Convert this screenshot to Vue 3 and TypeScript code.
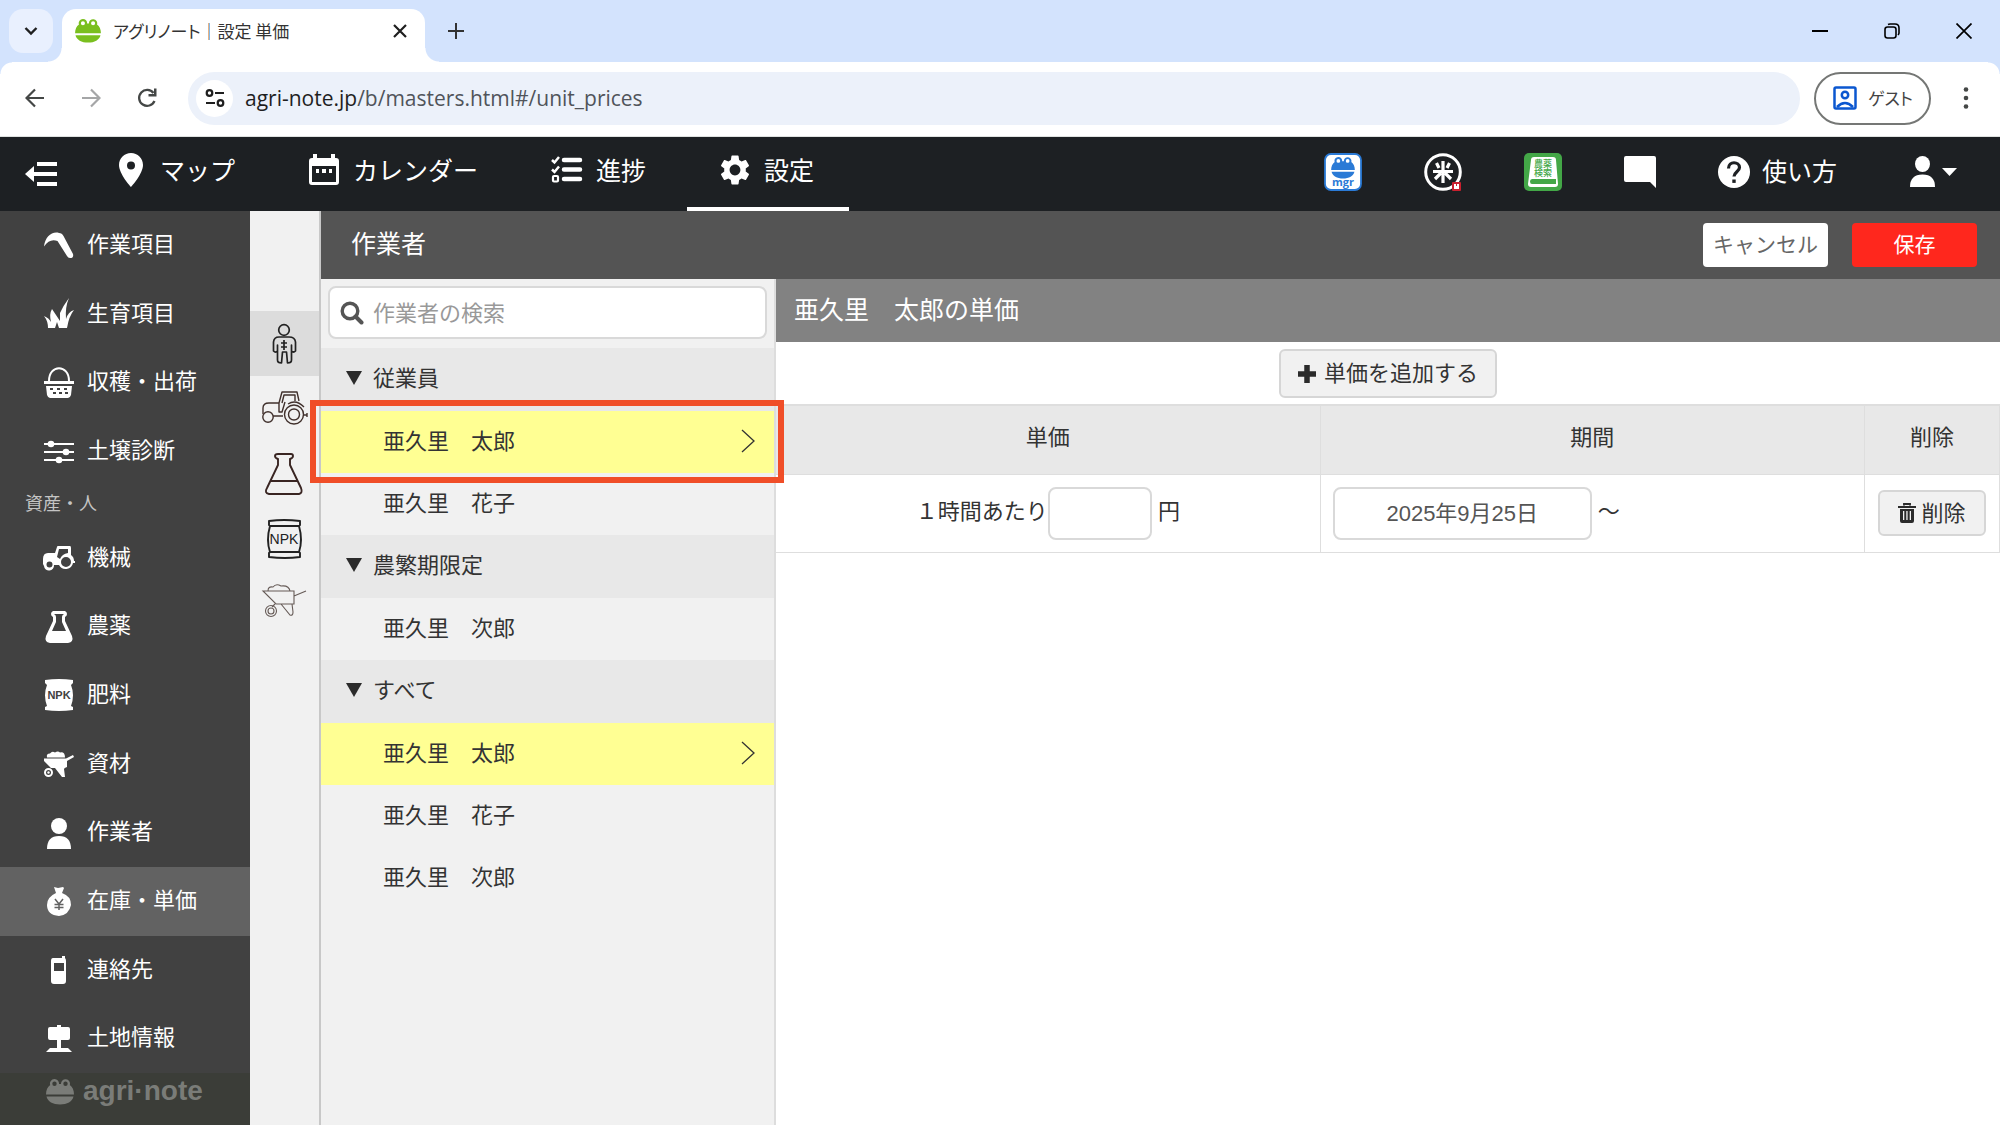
<script setup lang="ts">
import { ref } from 'vue'

interface NavItem { label: string; icon: string }
interface WorkerGroup { name: string; workers: string[] }

const topNav: NavItem[] = [
  { label: 'マップ', icon: 'pin' },
  { label: 'カレンダー', icon: 'calendar' },
  { label: '進捗', icon: 'checklist' },
  { label: '設定', icon: 'gear' },
]
const activeTop = '設定'

const workItems: NavItem[] = [
  { label: '作業項目', icon: 'sickle' },
  { label: '生育項目', icon: 'grass' },
  { label: '収穫・出荷', icon: 'basket' },
  { label: '土壌診断', icon: 'sliders' },
]
const assetItems: NavItem[] = [
  { label: '機械', icon: 'tractor' },
  { label: '農薬', icon: 'flask' },
  { label: '肥料', icon: 'bag' },
  { label: '資材', icon: 'barrow' },
  { label: '作業者', icon: 'person' },
  { label: '在庫・単価', icon: 'money' },
  { label: '連絡先', icon: 'phone' },
  { label: '土地情報', icon: 'sign' },
]
const activeSide = '在庫・単価'

const categories: NavItem[] = [
  { label: '作業者', icon: 'o-worker' },
  { label: '機械', icon: 'o-tractor' },
  { label: '農薬', icon: 'o-flask' },
  { label: '肥料', icon: 'o-bag' },
  { label: '資材', icon: 'o-barrow' },
]
const activeCategory = '作業者'

const groups: WorkerGroup[] = [
  { name: '従業員', workers: ['亜久里　太郎', '亜久里　花子'] },
  { name: '農繁期限定', workers: ['亜久里　次郎'] },
  { name: 'すべて', workers: ['亜久里　太郎', '亜久里　花子', '亜久里　次郎'] },
]
const selected = ref('亜久里　太郎')
const search = ref('')
const price = ref('')
const startDate = ref('2025年9月25日')
</script>

<template>
  <div class="window">
    <svg class="sprite" aria-hidden="true">
      <symbol id="frog" viewBox="0 0 28 26">
        <g fill="currentColor">
          <path fill-rule="evenodd" d="M8.500 0a4.500 4.500 0 0 1 4.500 5h2a4.500 4.500 0 1 1 8.800 1C26.500 8 28 11 28 15.500H0C0 11 1.500 8 4.200 6A4.500 4.500 0 0 1 8.500 0zM8.500 2.500a2.200 2.200 0 1 0 0 4.400a2.200 2.200 0 0 0 0-4.400zM19.500 2.500a2.200 2.200 0 1 0 0 4.400a2.200 2.200 0 0 0 0-4.400z" />
          <path d="M0.500 17.500h27c-1 5-6.500 8-13.500 8s-12.500-3-13.500-8z" />
        </g>
      </symbol>
      <symbol id="pin" viewBox="0 0 32 36"><path fill="currentColor" fill-rule="evenodd" d="M16 1c6.600 0 12 5.200 12 12c0 9-12 22-12 22S4 22 4 13C4 6.200 9.400 1 16 1zm0 8.500a4 4 0 1 0 0 8a4 4 0 0 0 0-8z" /></symbol>
      <symbol id="calendar" viewBox="0 0 32 36"><path fill="currentColor" fill-rule="evenodd" d="M5 2h4v4h14V2h4v4h1q3 0 3 3v21q0 3-3 3H4q-3 0-3-3V9q0-3 3-3h1zM4 14v16h24V14zM8 17h3v4H8zM14 17h4v4h-4zM21 17h3v4h-3z" /></symbol>
      <symbol id="checklist" viewBox="0 0 32 36">
        <g fill="none" stroke="currentColor"><path stroke-width="4.500" stroke-linecap="round" d="M13 8h16M13 17.500h16M13 27h16" /><path stroke-width="2.500" d="M1 8l2.500 2.500l4.500-5.500M1 17.500L3.500 20L8 14.500" /><rect x="2" y="24" width="5" height="5.500" rx="1" stroke-width="2.200" /></g>
      </symbol>
      <symbol id="gear" viewBox="2 2 20 20"><path fill="currentColor" d="M19.140 12.940c.04-.3.06-.61.06-.94s-.02-.64-.07-.94l2.030-1.580c.18-.14.23-.41.12-.61l-1.920-3.320c-.12-.22-.37-.29-.59-.22l-2.390.96c-.5-.38-1.030-.7-1.620-.94l-.36-2.540c-.04-.24-.24-.41-.48-.41h-3.840c-.24 0-.43.17-.47.41l-.36 2.540c-.59.24-1.130.57-1.620.94l-2.390-.96c-.22-.08-.47 0-.59.22L2.740 8.870c-.12.21-.08.470.12.610l2.030 1.580c-.05.3-.09.630-.09.940s.02.640.07.940l-2.030 1.580c-.18.140-.23.410-.12.610l1.920 3.320c.12.220.37.290.59.220l2.390-.96c.5.380 1.030.700 1.620.940l.36 2.540c.05.240.24.410.48.410h3.840c.24 0 .44-.17.47-.41l.36-2.540c.59-.24 1.130-.56 1.620-.94l2.390.96c.22.080.47 0 .59-.22l1.920-3.320c.12-.22.070-.47-.12-.61l-2.010-1.580zM12 15.600c-1.980 0-3.600-1.620-3.600-3.600s1.620-3.600 3.600-3.600 3.600 1.620 3.600 3.600-1.620 3.600-3.600 3.600z" /></symbol>

      <symbol id="sickle" viewBox="0 0 32 32"><path fill="currentColor" d="M1 17.500C2 8 9 2 16 4q3 0 4.500 3L30 25q1 4-3 4q-2 0-3-2L14.500 12C9 10 5 12 1 17.500z" /></symbol>
      <symbol id="grass" viewBox="0 0 32 32"><path fill="currentColor" d="M5 30Q5 23 1 18q5 2 7 6q-2-8 1-13q4 6 8 12q0-5 0-8Q20 8 26 0Q22 9 23 21q2-7 8-9q-5 6-7 18h-8l-2-6l-2 6z" /></symbol>
      <symbol id="basket" viewBox="0 0 32 32">
        <path fill="none" stroke="currentColor" stroke-width="2" d="M6 14C6 -3 26 -3 26 14" /><path fill="currentColor" d="M1 14h30v3H1z" />
        <path fill="currentColor" fill-rule="evenodd" d="M3 19h26l-1 9q-1 3-3 3H7q-2 0-3-3zM7 21v2h3v-2zM14 21v2h3v-2zM21 21v2h3v-2zM10 25v2h3v-2zM16 25v2h3v-2zM22 25v2h3v-2z" />
      </symbol>
      <symbol id="sliders" viewBox="0 0 32 32"><path stroke="currentColor" stroke-width="2.200" d="M1 9h30M1 17h30M1 25h30" /><g fill="currentColor"><circle cx="8" cy="9" r="3.300" /><circle cx="23" cy="17" r="3.300" /><circle cx="16" cy="25" r="3.300" /></g></symbol>
      <symbol id="tractor" viewBox="0 0 32 32">
        <path fill="currentColor" fill-rule="evenodd" d="M0 22v-5q0-6 5-6h7l2-6q0-1 1-1h12q1 0 1 2v7q3 2 3 6h1v2h-2a7.500 7.500 0 0 1-14 2h-5a5 5 0 0 1-10 1zM16 7l-2 8l3 2q2-5 8-6V7zM6.500 19.500a3 3 0 1 0 0 6a3 3 0 0 0 0-6zM23 15a5 5 0 1 0 0 10a5 5 0 0 0 0-10z" />
      </symbol>
      <symbol id="flask" viewBox="0 0 32 32"><path fill="currentColor" fill-rule="evenodd" d="M10 0h12q2 1 2 3q0 2-2 3v4l7 15q2 6-4 7H7q-6-1-4-7l7-15V6q-2-1-2-3q0-2 2-3zM11 3q2 1 2 3v5L9 20h14l-4-9V6q0-2 2-3z" /></symbol>
      <symbol id="bag" viewBox="0 0 32 32"><path fill="currentColor" d="M2 1q14-2 28 0v3l-2 2q4 10 0 21l2 1v3q-14 2-28 0v-3l2-1Q0 16 4 6L2 4z" /></symbol>
      <symbol id="barrow" viewBox="0 0 32 32">
        <path fill="currentColor" d="M4 9.500q-1-4 3-4q2-3 5-1q3-2 5 0q5-1 5 5z" />
        <path fill="currentColor" d="M1 10.500h22l7-3.500l1 2l-7 4v6q-3 1-3 2l1 8h-3l-7-9h-4L1 13z" />
        <circle cx="5.500" cy="24.500" r="3.500" fill="none" stroke="currentColor" stroke-width="2" /><circle cx="5.500" cy="24.500" r="1.200" fill="currentColor" />
      </symbol>
      <symbol id="person" viewBox="0 0 32 32"><g fill="currentColor"><circle cx="16" cy="9" r="8" /><path d="M4 32q0-13 12-13t12 13z" /></g></symbol>
      <symbol id="money" viewBox="0 0 32 32"><path fill="currentColor" d="M11 2l4 1l5-1l1 1l-2 5q9 3 9 12q-2 10-12 11Q4 30 4 20q0-8 9-12z" /><path fill="none" stroke="#626262" stroke-width="1.500" d="M12 14l4 5l4-5M16 19v6M11.500 19.500h9M11.500 22.500h9" /></symbol>
      <symbol id="phone" viewBox="0 0 32 32"><path fill="currentColor" fill-rule="evenodd" d="M10 4h9V2h3v2q1 1 1 3v20q0 3-3 3h-9q-3 0-3-3V7q0-3 2-3zM11 9v8h10V9z" /></symbol>
      <symbol id="sign" viewBox="0 0 32 32"><path fill="currentColor" d="M14 2h4v2h7q2 0 2 2v9q0 2-2 2h-7v8h7l4 4H3l4-4h7v-8H7q-2 0-2-2V6q0-2 2-2h7z" /></symbol>

      <symbol id="o-worker" viewBox="0 0 48 48">
        <g fill="none" stroke="#222" stroke-width="1.700" stroke-linejoin="round"><circle cx="23" cy="10" r="5.300" /><path d="M18 17h10q6 0 6.500 5v9q-2 2-4 0v-6v15q0 3-4 3l-1-11h-4l-1 11q-4 0-4-3V25v6q-2 2-4 0v-9q.5-5 5.500-5z" /><path d="M23 20v10M20 23h6M20 27h6" /></g>
      </symbol>
      <symbol id="o-tractor" viewBox="0 -2 48 48">
        <g fill="none" stroke="#40302c" stroke-width="1.400" stroke-linejoin="round"><path d="M2 27v-6q0-5 6-5h10l3-11h15l2 9M21 16l2-8h11v6M18 16v9h3l3-10M12 29h10M27 17q8-5 16 3M43 28h3v-2M46 28v2" /><circle cx="7" cy="30" r="5.200" /><circle cx="33" cy="27.500" r="9.500" /><circle cx="33" cy="27.500" r="5.500" /></g>
      </symbol>
      <symbol id="o-flask" viewBox="0 0 48 48"><g fill="none" stroke="#392522" stroke-width="1.900" stroke-linejoin="round"><path d="M17 4h13q2 0 2 2q0 2-3 3v6l11 23q2 5-2 6H8q-5-1-2-6l11-23V9q-3-1-3-3q0-2 3-2zM10 31h27" /></g></symbol>
      <symbol id="o-bag" viewBox="0 0 48 48"><path fill="none" stroke="#222" stroke-width="1.900" stroke-linejoin="round" d="M8 6q15-2 31 0v4l-1 1q4 14 0 26l1 1v4q-15 2-31 0v-4l1-1q-4-12 0-26l-1-1zM9 11h29M9 37h29" /></symbol>
      <symbol id="o-barrow" viewBox="0 0 48 48"><g fill="none" stroke="#665b57" stroke-width="1.100"><path d="M2 11h31v13H15zM33 16l12-5M7 11q0-5 5-4q3-4 8-1q8-1 9 5M20 24l9 11q3 1 3-3l-1-8M11 27l3-3" /><circle cx="10" cy="31" r="5.500" /><circle cx="10" cy="31" r="3" /></g></symbol>
    </svg>

    <div class="tabstrip">
      <button class="tab-search" aria-label="タブを検索"><svg width="14" height="10" viewBox="0 0 14 10"><path d="M1.500 2l5.500 5.500L12.500 2" fill="none" stroke="#1f1f1f" stroke-width="2.400" /></svg></button>
      <div class="tab">
        <svg class="favicon" width="26" height="24"><use href="#frog" /></svg>
        <span class="tab-title">アグリノート｜設定 単価</span>
        <button class="icon-btn" aria-label="タブを閉じる"><svg width="14" height="14" viewBox="0 0 14 14"><path d="M1 1l12 12M13 1L1 13" stroke="#1f1f1f" stroke-width="2.200" /></svg></button>
      </div>
      <button class="icon-btn new-tab" aria-label="新しいタブ"><svg width="18" height="18" viewBox="0 0 18 18"><path d="M9 1v16M1 9h16" stroke="#333" stroke-width="2" /></svg></button>
      <div class="win-controls">
        <button class="icon-btn" aria-label="最小化"><svg width="16" height="16" viewBox="0 0 16 16"><path d="M0 8h16" stroke="#000" stroke-width="2" /></svg></button>
        <button class="icon-btn" aria-label="元に戻す"><svg width="16" height="16" viewBox="0 0 16 16"><g fill="none" stroke="#000" stroke-width="1.600"><rect x="1" y="4" width="11" height="11" rx="2.500" /><path d="M4 1.500Q5 1 6 1h5q4 0 4 4v5q0 1-1 2" /></g></svg></button>
        <button class="icon-btn" aria-label="閉じる"><svg width="16" height="16" viewBox="0 0 16 16"><path d="M0.500 0.500l15 15M15.500 0.500l-15 15" stroke="#000" stroke-width="1.700" /></svg></button>
      </div>
    </div>

    <div class="toolbar">
      <div class="history">
        <button class="icon-btn" aria-label="戻る"><svg width="20" height="20" viewBox="0 0 20 20"><path d="M19 10H2M10 1.500L1.500 10L10 18.500" fill="none" stroke="#444746" stroke-width="2.200" /></svg></button>
        <button class="icon-btn" aria-label="進む"><svg width="20" height="20" viewBox="0 0 20 20"><path d="M1 10h17M10 1.500l8.500 8.500L10 18.500" fill="none" stroke="#a5a6a7" stroke-width="2.200" /></svg></button>
        <button class="icon-btn" aria-label="再読み込み"><svg width="20" height="20" viewBox="0 0 20 20"><path d="M17.500 13A8 8 0 1 1 16.500 5" fill="none" stroke="#444746" stroke-width="2.300" /><path d="M19.500 0.500v8h-8V6h5.500V0.500z" fill="#444746" /></svg></button>
      </div>
      <div class="omnibox">
        <span class="site-info"><svg width="20" height="20" viewBox="0 0 20 20"><g fill="none" stroke="#1f1f1f" stroke-width="2.200"><circle cx="4.500" cy="5" r="2.800" /><circle cx="15.500" cy="15" r="2.800" /><path d="M10 5h9M1 15h9" /></g></svg></span>
        <span class="url">agri-note.jp<span class="path">/b/masters.html#/unit_prices</span></span>
      </div>
      <button class="guest">
        <svg width="24" height="24" viewBox="0 0 24 24"><g fill="none" stroke="#0b57d0" stroke-width="2.500"><rect x="1.500" y="1.500" width="21" height="21" rx="1.500" /><circle cx="12" cy="9" r="3.200" /><path d="M4 21q8-8 16 0" /></g></svg>
        <span>ゲスト</span>
      </button>
      <button class="icon-btn menu-dots" aria-label="メニュー"><svg width="6" height="24" viewBox="0 0 6 24"><g fill="#444746"><circle cx="3" cy="3.500" r="2.300" /><circle cx="3" cy="12" r="2.300" /><circle cx="3" cy="20.500" r="2.300" /></g></svg></button>
    </div>

    <header class="app-header">
      <button class="collapse" aria-label="メニューを閉じる"><svg width="32" height="26" viewBox="0 0 32 26"><path d="M12 3h20M6 13h26M12 23h20" stroke="#fff" stroke-width="4" /><path d="M9 5v16L0 13z" fill="#fff" /></svg></button>
      <nav class="top-nav">
        <a v-for="n in topNav" :key="n.label" href="#" :class="{ active: n.label === activeTop }">
          <svg width="32" :height="n.icon === 'gear' ? 30 : 36"><use :href="'#' + n.icon" /></svg><span>{{ n.label }}</span>
        </a>
      </nav>
      <div class="top-tools">
        <a href="#" aria-label="マネージャー"><svg width="38" height="38" viewBox="0 0 38 38"><rect x="1" y="1" width="36" height="36" rx="6" fill="#fff" stroke="#2a7ad6" stroke-width="1.800" /><svg x="7" y="4" width="24" height="22" color="#2a7ad6"><use href="#frog" /></svg><text x="19" y="33" text-anchor="middle" font-family="Open Sans" font-weight="700" font-size="11" fill="#2a7ad6">mgr</text></svg></a>
        <a href="#" aria-label="米"><svg width="38" height="38" viewBox="0 0 38 38"><circle cx="19" cy="19" r="17.300" fill="none" stroke="#fff" stroke-width="3" /><path d="M19 8v22M9 18.500h20M12.500 10l2.500 5M25.500 10l-2.500 5M17 20l-6 6M21 20l6 6" fill="none" stroke="#fff" stroke-width="3.200" /><rect x="28" y="29" width="9" height="9" rx="1" fill="#c9202e" /><path d="M30 31h2v2h1v-2h2v5h-5z" fill="#fff" /></svg></a>
        <a href="#" aria-label="農薬検索"><svg width="38" height="38" viewBox="0 0 38 38"><rect width="38" height="38" rx="5" fill="#43a747" /><path d="M10 4h19q3 0 3 3l2 24q0 3-3 3H7q-3 0-3-3L7 7q0-3 3-3z" fill="#fff" /><path d="M8 26h24v5H8q-2 0-2-2.500T8 26z" fill="#43a747" /><text font-family="Noto Sans CJK JP" font-weight="500" font-size="9" fill="#43a747"><tspan x="10" y="14">農薬</tspan><tspan x="10" y="23">検索</tspan></text></svg></a>
        <a href="#" aria-label="メッセージ"><svg width="32" height="32" viewBox="0 0 32 32"><path d="M2 0h28q2 0 2 2v30l-6-6H2q-2 0-2-2V2q0-2 2-2z" fill="#fff" /></svg></a>
        <a href="#" class="help"><svg width="32" height="32" viewBox="0 0 32 32"><circle cx="16" cy="16" r="16" fill="#fff" /><path d="M10.500 12.500c0-8 11-7 11-1c0 4-5.500 4.500-5.500 9" fill="none" stroke="#1d2023" stroke-width="3.200" /><rect x="14.300" y="23.500" width="3.400" height="3.400" fill="#1d2023" /></svg><span>使い方</span></a>
        <button class="user" aria-label="アカウント"><svg width="48" height="32" viewBox="0 0 48 32"><g fill="#fff"><ellipse cx="12.500" cy="8" rx="7.500" ry="8" /><path d="M0 31q0-12.500 12.500-12.500T25 31zM32 12h15l-7.500 8z" /></g></svg></button>
      </div>
    </header>

    <div class="body">
      <aside class="sidebar">
        <a v-for="n in workItems" :key="n.label" href="#" class="side-item"><svg width="32" height="32"><use :href="'#' + n.icon" /></svg><span>{{ n.label }}</span></a>
        <div class="side-heading">資産・人</div>
        <a v-for="n in assetItems" :key="n.label" href="#" class="side-item" :class="{ active: n.label === activeSide }">
          <svg width="32" height="32"><use :href="'#' + n.icon" /><text v-if="n.icon === 'bag'" class="bag-text" x="16" y="20">NPK</text></svg><span>{{ n.label }}</span>
        </a>
        <div class="brand"><svg width="28" height="26"><use href="#frog" /></svg><span>agri·note</span></div>
      </aside>

      <nav class="rail">
        <a v-for="c in categories" :key="c.label" href="#" :aria-label="c.label" :class="{ active: c.label === activeCategory }">
          <svg width="48" height="48"><use :href="'#' + c.icon" /><text v-if="c.icon === 'o-bag'" class="bag-outline-text" x="23" y="29">NPK</text></svg>
        </a>
      </nav>

      <main class="main">
        <div class="title-bar">
          <h1>作業者</h1>
          <button class="action cancel">キャンセル</button>
          <button class="action save">保存</button>
        </div>
        <div class="split">
          <section class="list">
            <label class="search">
              <svg width="24" height="24" viewBox="0 0 24 24"><circle cx="10" cy="10" r="7.800" fill="none" stroke="#555" stroke-width="3.400" /><path d="M15.500 15.500l6 6" stroke="#555" stroke-width="4" stroke-linecap="round" /></svg>
              <input v-model="search" type="text" placeholder="作業者の検索" aria-label="作業者の検索" />
            </label>
            <div v-for="(g, gi) in groups" :key="g.name" class="group">
              <h2><svg width="16" height="16" viewBox="0 0 16 16"><path d="M0 1h16L8 15z" fill="#2b2b2b" /></svg><span>{{ g.name }}</span></h2>
              <button v-for="w in g.workers" :key="w" class="worker" :class="{ selected: w === selected, marked: gi === 0 && w === selected }" @click="selected = w">
                <span>{{ w }}</span>
                <svg v-if="w === selected" width="14" height="24" viewBox="0 0 14 24"><path d="M1 1l12 11L1 23" fill="none" stroke="#333" stroke-width="1.300" /></svg>
              </button>
            </div>
          </section>

          <section class="detail">
            <h2 class="detail-title">{{ selected }}の単価</h2>
            <div class="add-row">
              <button class="btn add"><svg width="18" height="18" viewBox="0 0 18 18"><path d="M9 0v18M0 9h18" stroke="#2b2b2b" stroke-width="5.500" /></svg><span>単価を追加する</span></button>
            </div>
            <table>
              <thead><tr><th>単価</th><th>期間</th><th class="del">削除</th></tr></thead>
              <tbody>
                <tr>
                  <td class="price"><label for="price">１時間あたり</label><input id="price" v-model="price" type="text" /><span class="unit">円</span></td>
                  <td class="period"><input v-model="startDate" type="text" aria-label="開始日" /><span>～</span></td>
                  <td class="del"><button class="btn remove"><svg width="18" height="20" viewBox="0 0 18 20"><path d="M6 2.500V1h6v1.500M0 4h18" fill="none" stroke="#2b2b2b" stroke-width="1.900" /><path d="M2 6h14v12q0 2-2 2H4q-2 0-2-2zM5 8v9h1.300V8zM8.300 8v9h1.300V8zM11.700 8v9H13V8z" fill="#2b2b2b" fill-rule="evenodd" /></svg><span>削除</span></button></td>
                </tr>
              </tbody>
            </table>
          </section>
        </div>
      </main>
    </div>
  </div>
</template>

<style>
body { margin: 0; background: #fff; }
</style>

<style scoped>
* { box-sizing: border-box; }
.window { display: flex; flex-direction: column; min-height: 100vh; font-family: "Noto Sans CJK JP", sans-serif; font-size: 22px; line-height: 32px; color: #333; }
.sprite { position: absolute; width: 0; height: 0; }
svg { display: block; flex: none; }
button { font: inherit; color: inherit; margin: 0; padding: 0; border: 0; background: none; }
a { color: inherit; text-decoration: none; }
h1, h2 { margin: 0; font-weight: 400; }
.icon-btn { display: flex; align-items: center; justify-content: center; }

.tabstrip { display: flex; align-items: flex-start; height: 62px; padding: 9px 28px 0 9px; background: #d3e3fd; }
.tab-search { display: flex; align-items: center; justify-content: center; width: 44px; height: 44px; border-radius: 14px; background: #e9f0fe; }
.tab { position: relative; display: flex; align-items: center; width: 363px; height: 53px; margin-left: 9px; padding: 0 18px 9px 13px; border-radius: 14px 14px 0 0; background: #fff; }
.tab::before, .tab::after { content: ""; position: absolute; bottom: 0; width: 14px; height: 14px; }
.tab::before { left: -14px; background: radial-gradient(circle at 0 0, transparent 13px, #fff 14px); }
.tab::after { right: -14px; background: radial-gradient(circle at 100% 0, transparent 13px, #fff 14px); }
.favicon { color: #7abf1f; }
.tab-title { flex: 1; margin-left: 12px; font-size: 17px; line-height: 24px; font-feature-settings: "palt"; color: #333; }
.new-tab { width: 32px; height: 44px; margin-left: 15px; }
.win-controls { display: flex; align-items: center; gap: 56px; height: 44px; margin-left: auto; }

.toolbar { position: relative; display: flex; align-items: center; height: 75px; padding: 0 31px 2px 25px; border-bottom: 1px solid #dfe2e0; background: #fff; }
.toolbar::before, .toolbar::after { content: ""; position: absolute; top: 0; width: 12px; height: 12px; }
.toolbar::before { left: 0; background: radial-gradient(circle at 100% 100%, transparent 11px, #d3e3fd 12px); }
.toolbar::after { right: 0; background: radial-gradient(circle at 0 100%, transparent 11px, #d3e3fd 12px); }
.history { display: flex; gap: 36px; }
.omnibox { display: flex; flex: 1; align-items: center; height: 53px; margin-left: 31px; padding-left: 8px; border-radius: 27px; background: #ecf1fa; }
.site-info { display: flex; align-items: center; justify-content: center; width: 37px; height: 37px; border-radius: 50%; background: #fff; }
.url { margin-left: 12px; font-family: "Open Sans", sans-serif; font-size: 21px; color: #1f1f1f; }
.path { color: #50545a; }
.guest { display: flex; align-items: center; gap: 11px; height: 53px; margin-left: 14px; padding: 0 16px 0 17px; border: 2px solid #757775; border-radius: 27px; font-size: 17px; font-feature-settings: "palt"; color: #444; }
.menu-dots { margin-left: 32px; }

.app-header { display: flex; height: 74px; padding: 0 42px 0 25px; background: #1d2023; color: #fff; font-size: 25px; }
.collapse { align-self: center; }
.top-nav { display: flex; gap: 6px; margin-left: 26px; }
.top-nav a { display: flex; align-items: center; gap: 13px; padding: 0 35px 4px 32px; border-bottom: 4px solid transparent; white-space: nowrap; }
.top-nav span, .help span { padding-bottom: 3px; }
.top-nav a.active { border-color: #fff; }
.top-tools { display: flex; align-items: center; gap: 62px; margin-left: auto; padding-bottom: 5px; }
.help { display: flex; align-items: center; gap: 12px; white-space: nowrap; }
.user { margin-left: 11px; }

.body { display: flex; flex: 1; }
.sidebar { display: flex; flex-direction: column; flex: none; width: 250px; min-height: calc(100vh - 211px); background: #414141; color: #fff; }
.side-item { display: flex; flex: 1; align-items: center; gap: 12px; padding-left: 43px; }
.side-item span { padding-bottom: 7px; }
.side-item.active { background: #626262; }
.side-heading { height: 38px; padding-left: 25px; font-size: 18px; line-height: 32px; color: #c4c4c4; }
.bag-text { font: 700 11px "Liberation Sans", sans-serif; text-anchor: middle; fill: #414141; }
.bag-outline-text { font: 14px "Liberation Sans", sans-serif; text-anchor: middle; fill: #222; }
.brand { display: flex; align-items: flex-start; gap: 9px; height: 52px; padding: 6px 0 0 46px; background: #3b3d38; font-family: "Liberation Sans", sans-serif; font-weight: 700; font-size: 28px; line-height: 24px; color: #7a7c78; }

.rail { flex: none; width: 71px; padding-top: 100px; border-right: 2px solid #c8c8c8; background: #f1f1f1; }
.rail a { display: flex; align-items: center; justify-content: center; height: 65px; }
.rail a.active { background: #dcdcdc; }

.main { display: flex; flex: 1; flex-direction: column; min-width: 0; }
.title-bar { display: flex; align-items: center; gap: 24px; height: 68px; padding: 0 23px 0 30px; background: #545454; color: #fff; }
.title-bar h1 { flex: 1; padding-bottom: 6px; font-size: 25px; }
.action { width: 125px; height: 44px; padding-bottom: 4px; border-radius: 4px; white-space: nowrap; }
.cancel { background: #fff; color: #666; font-size: 21px; }
.save { background: #ff271d; font-size: 21px; }
.split { display: flex; flex: 1; }

.list { flex: none; width: 455px; border-right: 2px solid #ddd; background: #f1f1f1; }
.search { display: flex; align-items: center; gap: 9px; height: 53px; margin: 7px 7px 9px; padding: 0 10px; border: 2px solid #d9d9d9; border-radius: 8px; background: #fff; }
.search input { flex: 1; min-width: 0; padding: 0 0 4px; border: 0; outline: 0; background: none; font: inherit; color: #333; }
.search input::placeholder { color: #999; opacity: 1; }
.group h2 { display: flex; align-items: center; gap: 11px; height: 63px; padding: 0 0 3px 25px; background: #e8e8e8; font-size: 22px; }
.group h2 span { padding-bottom: 4px; }
.worker { position: relative; display: flex; align-items: center; justify-content: space-between; width: 100%; height: 62px; padding: 0 19px 2px 62px; text-align: left; }
.worker span { padding-bottom: 5px; }
.worker.selected { background: #ffff93; }
.worker.marked::after { content: ""; position: absolute; z-index: 2; inset: -11px -10px -10px -11px; border: 6px solid #f04e28; }

.detail { flex: 1; min-width: 0; background: #fff; }
.detail-title { height: 63px; padding-left: 18px; background: #828282; color: #fff; font-size: 25px; line-height: 59px; }
.add-row { display: flex; justify-content: center; padding: 7px 0 6px; }
.btn { display: inline-flex; align-items: center; justify-content: center; gap: 8px; border: 2px solid #d6d6d6; border-radius: 6px; background: #f1f1f1; white-space: nowrap; }
.btn span { padding-bottom: 5px; }
.add { height: 49px; padding: 0 17px; }
table { width: 100%; table-layout: fixed; border-collapse: collapse; }
th, td { padding: 0; border: 1px solid #dedede; }
th { height: 69px; padding-bottom: 9px; border-top-width: 2px; background: #e8e8e8; font-weight: 400; }
td { height: 78px; }
th:first-child, td:first-child { border-left: 0; }
.del { width: 135px; }
td.del { text-align: center; }
.price { text-align: center; }
.price input, .period input { height: 53px; padding: 0 0 4px; border: 2px solid #d9d9d9; border-radius: 8px; background: #fff; font-family: "Liberation Sans", "Noto Sans CJK JP", sans-serif; font-size: 22px; color: #555; text-align: center; vertical-align: middle; }
.price input { width: 104px; }
.unit { margin-left: 6px; }
.period { padding-left: 12px; }
.period input { width: 259px; margin-right: 6px; }
.remove { width: 108px; height: 46px; gap: 5px; vertical-align: middle; }
</style>
